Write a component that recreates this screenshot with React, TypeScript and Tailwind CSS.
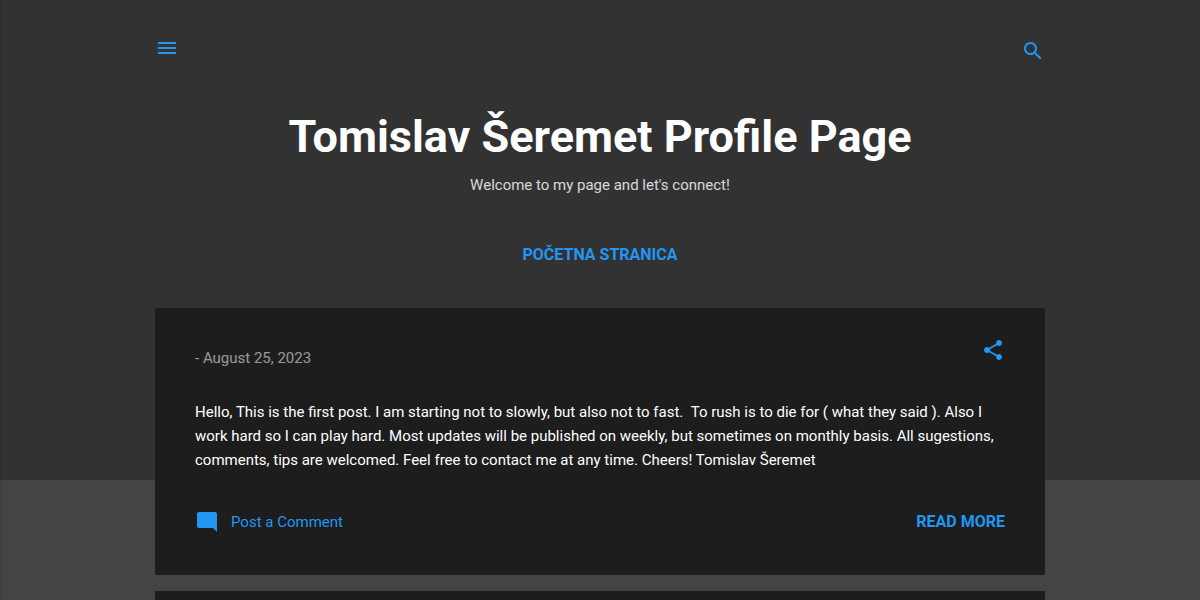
import type { ReactNode } from 'react'

const posts = [
  {
    id: 'first',
    date: 'August 25, 2023',
    body: 'Hello, This is the first post. I am starting not to slowly, but also not to fast. \u00a0To rush is to die for ( what they said ). Also I work hard so I can play hard. Most updates will be published on weekly, but sometimes on monthly basis. All sugestions, comments, tips are welcomed. Feel free to contact me at any time. Cheers! Tomislav Šeremet',
  },
]

export default function App() {
  return (
    <div className="relative h-screen overflow-hidden bg-[#444444] font-['Roboto',sans-serif] text-[15px] text-white">
      <div className="absolute inset-x-0 top-0 h-4/5 bg-[#323232]" />
      <div className="absolute inset-y-0 left-0 w-1 bg-linear-to-r from-black/10 to-transparent" />
      <div className="relative mx-auto max-w-[890px]">
        <PageHeader />
        <main className="flex flex-col gap-4">
          {posts.map((post) => (
            <Post key={post.id} date={post.date} body={post.body} />
          ))}
          <section className="h-40 bg-[#1d1d1d]" />
        </main>
      </div>
    </div>
  )
}

function PageHeader() {
  return (
    <header className="flex flex-col items-center">
      <div className="flex w-full items-start justify-between pt-9">
        <IconButton label="Menu">
          <path d="M3 18h18v-2H3v2zm0-5h18v-2H3v2zm0-7v2h18V6H3z" />
        </IconButton>
        <div className="pt-[3px]">
          <IconButton label="Search">
            <path d="M15.5 14h-.79l-.28-.27C15.41 12.59 16 11.11 16 9.5 16 5.91 13.09 3 9.5 3S3 5.91 3 9.5 5.91 16 9.5 16c1.61 0 3.09-.59 4.23-1.57l.27.28v.79l5 4.99L20.49 19l-4.99-5zm-6 0C7.01 14 5 11.99 5 9.5S7.01 5 9.5 5 14 7.01 14 9.5 11.99 14 9.5 14z" />
          </IconButton>
        </div>
      </div>
      <h1 className="mt-11 text-[45px] leading-[60px] font-bold">Tomislav Šeremet Profile Page</h1>
      <p className="mt-2 leading-5 text-white/80">Welcome to my page and let's connect!</p>
      <nav className="mt-[50px] mb-[43px]">
        <a href="#" className="block text-base leading-5 font-bold text-[#2196f3] uppercase">
          Početna stranica
        </a>
      </nav>
    </header>
  )
}

function Post({ date, body }: { date: string; body: string }) {
  return (
    <article className="bg-[#1d1d1d] px-10 pt-[30px] pb-[41px]">
      <div className="flex items-start justify-between">
        <time className="mt-[10px] leading-5 text-white/54">- {date}</time>
        <IconButton label="Share">
          <path d="M18 16.08c-.76 0-1.44.3-1.96.77L8.91 12.7c.05-.23.09-.46.09-.7s-.04-.47-.09-.7l7.05-4.11c.54.5 1.25.81 2.04.81 1.66 0 3-1.34 3-3s-1.34-3-3-3-3 1.34-3 3c0 .24.04.47.09.7L8.04 9.81C7.5 9.31 6.79 9 6 9c-1.66 0-3 1.34-3 3s1.34 3 3 3c.79 0 1.5-.31 2.04-.81l7.12 4.16c-.05.21-.08.43-.08.65 0 1.61 1.31 2.92 2.92 2.92 1.61 0 2.92-1.31 2.92-2.92s-1.31-2.92-2.92-2.92z" />
        </IconButton>
      </div>
      <p className="mt-8 leading-6">{body}</p>
      <footer className="mt-[38px] flex items-center justify-between text-[#2196f3]">
        <a href="#" className="flex items-center gap-3">
          <Icon>
            <path d="M21.99 4c0-1.1-.89-2-1.99-2H4c-1.1 0-2 .9-2 2v12c0 1.1.9 2 2 2h14l4 4-.01-18z" />
          </Icon>
          Post a Comment
        </a>
        <a href="#" className="text-base leading-5 font-bold uppercase">
          Read more
        </a>
      </footer>
    </article>
  )
}

function IconButton({ label, children }: { label: string; children: ReactNode }) {
  return (
    <button type="button" aria-label={label} className="block cursor-pointer text-[#2196f3]">
      <Icon>{children}</Icon>
    </button>
  )
}

function Icon({ children }: { children: ReactNode }) {
  return (
    <svg viewBox="0 0 24 24" className="h-6 w-6 fill-current" aria-hidden="true">
      {children}
    </svg>
  )
}
